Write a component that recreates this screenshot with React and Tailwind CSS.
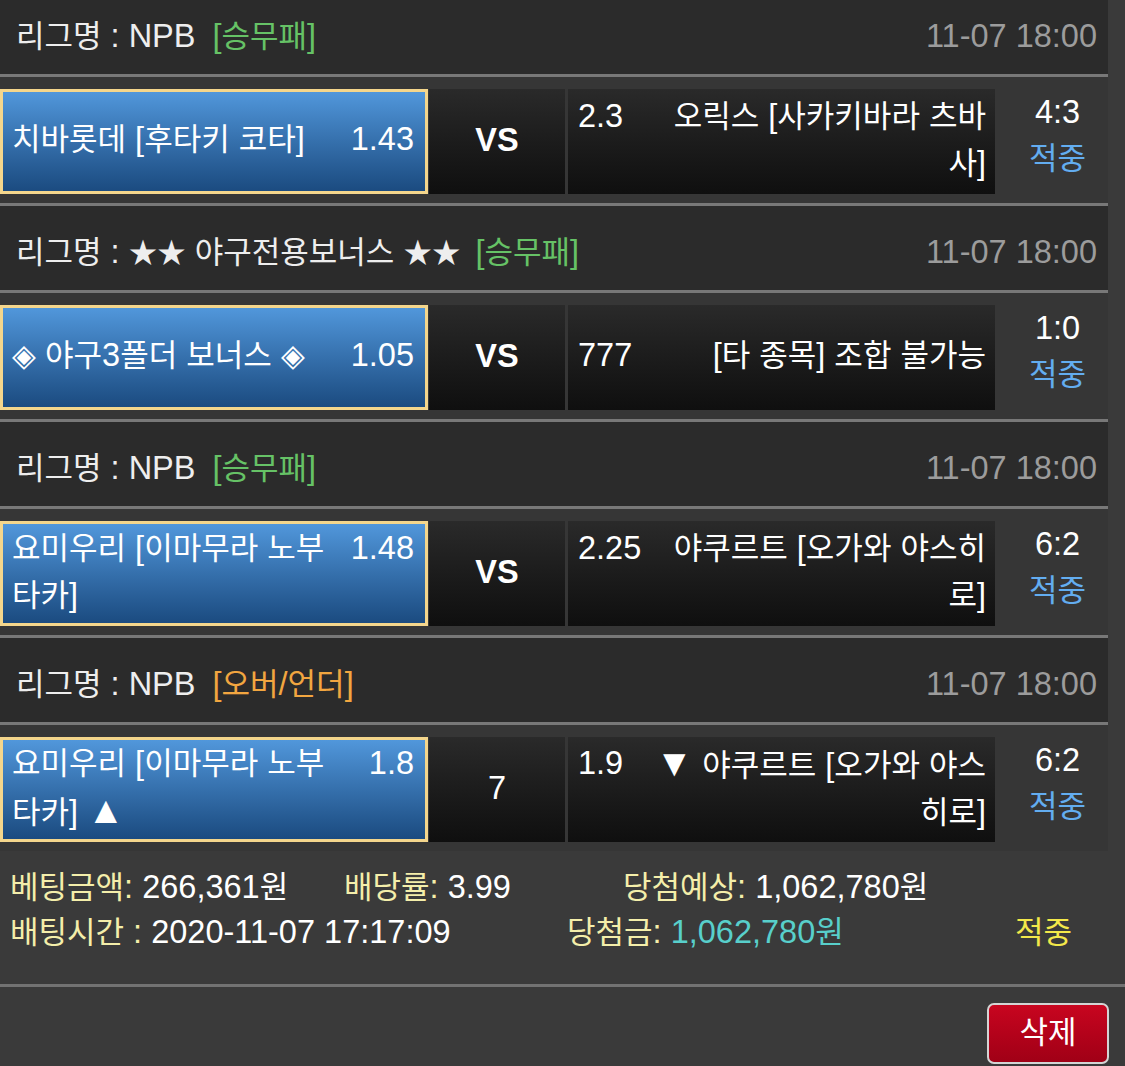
import React from "react";

function T({ s }) {
  const parts = s.match(/[\x20-\x7E]+|★+|[▲▼]|[^\x20-\x7E★▲▼]+/g) || [];
  return parts.map((p, i) =>
    /^[\x20-\x7E]/.test(p) ? (
      <span key={i} className="text-[32.5px]">
        {p}
      </span>
    ) : /^★/.test(p) ? (
      <span key={i} className="text-[28.5px]">
        {p}
      </span>
    ) : /^[▲▼]/.test(p) ? (
      <span key={i} className="text-[38px]">
        {p}
      </span>
    ) : (
      <span key={i}>{p}</span>
    )
  );
}

function Lines({ lines }) {
  return lines.map((l, i) => (
    <React.Fragment key={i}>
      {i > 0 && <br />}
      <T s={l} />
    </React.Fragment>
  ));
}

function Sep({ full }) {
  return <div className={full ? "h-[3px] w-full bg-[#727272]" : "h-[3px] w-[1108px] bg-[#787878]"} />;
}

function Header({ label, tag, tagClass }) {
  return (
    <div className="flex h-[84px] w-[1108px] items-center justify-between bg-[#2b2b2b] pl-[16px] pr-[11px] pt-[8px] text-[31px] leading-[40px]">
      <div className="whitespace-nowrap text-[#eeeeee]">
        <T s={label} />
        <span className={tagClass}>
          <T s={tag} />
        </span>
      </div>
      <div className="text-[#9c9c9c]">
        <T s="11-07 18:00" />
      </div>
    </div>
  );
}

function Match({ home, homeOdds, mid, midBold, awayOdds, away, score }) {
  return (
    <div className="flex w-[1108px] bg-[#363636] pb-[9px] pt-[12px] text-[31px]">
      <div className="flex h-[105px] w-[428px] shrink-0 items-center border-[3px] border-[#f4d68c] bg-linear-to-b from-[#5197db] to-[#1b4b80] pl-[9px] pr-[11px] text-white">
        <div className="flex w-full items-start justify-between pb-[4px] leading-[47px]">
          <span className="whitespace-nowrap">
            <Lines lines={home} />
          </span>
          <span className="shrink-0 pl-[10px]">
            <T s={homeOdds} />
          </span>
        </div>
      </div>
      <div
        className={
          "ml-[1px] flex h-[105px] w-[136px] shrink-0 items-center justify-center bg-linear-to-b from-[#2a2a2a] to-[#0f0f0f] pb-[2px] text-white " +
          (midBold ? "font-bold" : "")
        }
      >
        <T s={mid} />
      </div>
      <div className="ml-[3px] flex h-[105px] w-[427px] shrink-0 items-center bg-linear-to-b from-[#2a2a2a] to-[#0f0f0f] pl-[10px] pr-[9px] text-white">
        <div className="flex w-full items-start justify-between pb-[4px] leading-[47px]">
          <span className="shrink-0 pr-[10px]">
            <T s={awayOdds} />
          </span>
          <span className="whitespace-nowrap text-right">
            <Lines lines={away} />
          </span>
        </div>
      </div>
      <div className="flex flex-1 flex-col items-center pl-[12px] leading-[46px]">
        <span className="text-white">
          <T s={score} />
        </span>
        <span className="text-[#63adf0]">적중</span>
      </div>
    </div>
  );
}

export default function App() {
  return (
    <div className="min-h-screen w-full overflow-hidden bg-[#3a3a3a] font-['Liberation_Sans','Noto_Sans_CJK_KR',sans-serif]">
      <div className="-mt-[10px]">
        <Header label="리그명 : NPB" tag="[승무패]" tagClass="ml-[17px] text-[#66c266]" />
        <Sep />
        <Match
          home={["치바롯데 [후타키 코타]"]}
          homeOdds="1.43"
          mid="VS"
          midBold
          awayOdds="2.3"
          away={["오릭스 [사카키바라 츠바", "사]"]}
          score="4:3"
        />
        <Sep />
        <Header label="리그명 : ★★ 야구전용보너스 ★★ " tag="[승무패]" tagClass="ml-[6px] text-[#66c266]" />
        <Sep />
        <Match
          home={["◈ 야구3폴더 보너스 ◈"]}
          homeOdds="1.05"
          mid="VS"
          midBold
          awayOdds="777"
          away={["[타 종목] 조합 불가능"]}
          score="1:0"
        />
        <Sep />
        <Header label="리그명 : NPB" tag="[승무패]" tagClass="ml-[17px] text-[#66c266]" />
        <Sep />
        <Match
          home={["요미우리 [이마무라 노부", "타카]"]}
          homeOdds="1.48"
          mid="VS"
          midBold
          awayOdds="2.25"
          away={["야쿠르트 [오가와 야스히", "로]"]}
          score="6:2"
        />
        <Sep />
        <Header label="리그명 : NPB" tag="[오버/언더]" tagClass="ml-[17px] text-[#f2a640]" />
        <Sep />
        <Match
          home={["요미우리 [이마무라 노부", "타카] ▲"]}
          homeOdds="1.8"
          mid="7"
          awayOdds="1.9"
          away={["▼ 야쿠르트 [오가와 야스", "히로]"]}
          score="6:2"
        />
      </div>

      <div className="pb-[29px] pt-[14px] text-[31px] leading-[45px]">
        <div className="flex whitespace-nowrap pl-[10px]">
          <span className="w-[334px]">
            <span className="text-[#f4eeaa]">
              <T s="베팅금액: " />
            </span>
            <span className="text-white">
              <T s="266,361원" />
            </span>
          </span>
          <span className="w-[279px]">
            <span className="text-[#f4eeaa]">
              <T s="배당률: " />
            </span>
            <span className="text-white">
              <T s="3.99" />
            </span>
          </span>
          <span>
            <span className="text-[#f4eeaa]">
              <T s="당첨예상: " />
            </span>
            <span className="text-white">
              <T s="1,062,780원" />
            </span>
          </span>
        </div>
        <div className="flex whitespace-nowrap pl-[10px]">
          <span className="w-[557px]">
            <span className="text-[#f4eeaa]">
              <T s="배팅시간 : " />
            </span>
            <span className="text-white">
              <T s="2020-11-07 17:17:09" />
            </span>
          </span>
          <span className="w-[448px]">
            <span className="text-[#f4eeaa]">
              <T s="당첨금: " />
            </span>
            <span className="text-[#58cfcb]">
              <T s="1,062,780원" />
            </span>
          </span>
          <span className="text-[#f3e84a]">적중</span>
        </div>
      </div>
      <Sep full />
      <div className="flex justify-end pr-[16px] pt-[16px]">
        <button className="flex h-[61px] w-[122px] items-center justify-center rounded-[7px] border-2 border-[#d4d4d4] bg-linear-to-b from-[#c8051f] to-[#a00016] text-[31px] text-white">
          삭제
        </button>
      </div>
    </div>
  );
}
